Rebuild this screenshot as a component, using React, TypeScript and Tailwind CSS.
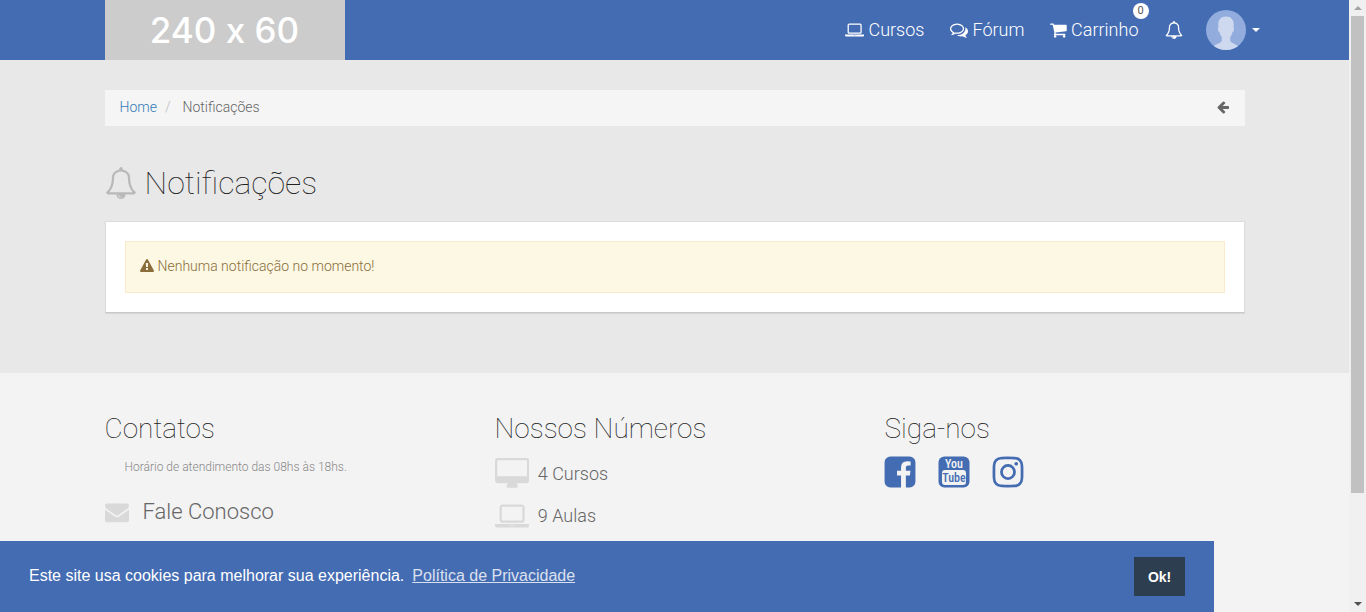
import React from "react";

const glyphs = {
  laptop: {
    width: 1920,
    d: "M416 1280q-66 0-113-47t-47-113v-704q0-66 47-113t113-47h1088q66 0 113 47t47 113v704q0 66-47 113t-113 47h-1088zm-32-864v704q0 13 9.5 22.5t22.5 9.5h1088q13 0 22.5-9.5t9.5-22.5v-704q0-13-9.5-22.5t-22.5-9.5h-1088q-13 0-22.5 9.5t-9.5 22.5zm1376 928h160v96q0 40-47 68t-113 28h-1600q-66 0-113-28t-47-68v-96h1760zm-720 96q16 0 16-16t-16-16h-160q-16 0-16 16t16 16h160z",
  },
  comments: {
    width: 1792,
    d: "M704 384q-153 0-286 52t-211.5 141-78.5 191q0 82 53 158t149 132l97 56-35 84q34-20 62-39l44-31 53 10q78 14 153 14 153 0 286-52t211.5-141 78.5-191-78.5-191-211.5-141-286-52zm0-128q191 0 353.5 68.5t256.5 186.5 94 257-94 257-256.5 186.5-353.5 68.5q-86 0-176-16-124 88-278 128-36 9-86 16h-3q-11 0-20.5-8t-11.5-21q-1-3-1-6.5t.5-6.5 2-6l2.5-5t3.5-5.5 4-5 4.5-5 4-4.5q5-6 23-25t26-29.5 22.5-29 25-38.5 20.5-44q-124-72-195-177t-71-224q0-139 94-257t256.5-186.5 353.5-68.5zm822 1169q10 24 20.5 44t25 38.5 22.5 29 26 29.5 23 25q1 1 4 4.5t4.5 5 4 5 3.5 5.5l2.5 5t2 6 .5 6.5-1 6.5q-3 14-13 22t-22 7q-50-7-86-16-154-40-278-128-90 16-176 16-271 0-472-132 58 4 88 4 161 0 309-45t264-129q125-92 192-212t67-254q0-77-23-152 129 71 204 178t75 230q0 120-71 224.5t-195 176.5z",
  },
  cart: {
    width: 1664,
    d: "M640 1536q0 52-38 90t-90 38-90-38-38-90 38-90 90-38 90 38 38 90zm896 0q0 52-38 90t-90 38-90-38-38-90 38-90 90-38 90 38 38 90zm128-1088v512q0 24-16.5 42.5t-40.5 21.5l-1044 122q13 60 13 70 0 16-24 64h920q26 0 45 19t19 45-19 45-45 19h-1024q-26 0-45-19t-19-45q0-11 8-31.5t16-36 21.5-40 15.5-29.5l-177-823h-204q-26 0-45-19t-19-45 19-45 45-19h256q16 0 28.5 6.5t19.5 15.5 13 24.5 8 26 5.5 29.5 4.5 26h1201q26 0 45 19t19 45z",
  },
  bell: {
    width: 1792,
    d: "M912 1696q0-16-16-16-59 0-101.5-42.5t-42.5-101.5q0-16-16-16t-16 16q0 73 51.5 124.5t124.5 51.5q16 0 16-16zm-666-288h1300q-266-300-266-832 0-51-24-105t-69-103-121.5-80.5-169.5-31.5-169.5 31.5-121.5 80.5-69 103-24 105q0 532-266 832zm1482 0q0 52-38 90t-90 38h-448q0 106-75 181t-181 75-181-75-75-181h-448q-52 0-90-38t-38-90q50-42 91-88t85-119.5 74.5-158.5 50-206 19.5-260q0-152 117-282.5t307-158.5q-8-19-8-39 0-40 28-68t68-28 68 28 28 68q0 20-8 39 190 28 307 158.5t117 282.5q0 139 19.5 260t50 206 74.5 158.5 85 119.5 91 88z",
  },
  arrowLeft: {
    width: 1792,
    d: "M1664 896v128q0 53-32.5 90.5t-84.5 37.5h-704l293 294q38 36 38 90t-38 90l-75 76q-37 37-90 37-52 0-91-37l-651-652q-37-37-37-90 0-52 37-91l651-650q38-38 91-38 52 0 90 38l75 74q38 38 38 91t-38 91l-293 293h704q52 0 84.5 37.5t32.5 90.5z",
  },
  warning: {
    width: 1792,
    d: "M1024 1375v-190q0-14-9.5-23.5t-22.5-9.5h-192q-13 0-22.5 9.5t-9.5 23.5v190q0 14 9.5 23.5t22.5 9.5h192q13 0 22.5-9.5t9.5-23.5zm-2-374l18-459q0-12-10-19-13-11-24-11h-220q-11 0-24 11-10 7-10 21l17 457q0 10 10 16.5t24 6.5h185q14 0 23.5-6.5t10.5-16.5zm-14-934l768 1408q35 63-2 126-17 29-46.5 46t-63.5 17h-1536q-34 0-63.5-17t-46.5-46q-37-63-2-126l768-1408q17-31 47-49t65-18 65 18 47 49z",
  },
  envelope: {
    width: 1792,
    d: "M1792 710v794q0 66-47 113t-113 47h-1472q-66 0-113-47t-47-113v-794q44 49 101 87 362 246 497 345 57 42 92.5 65.5t94.5 48 110 24.5h2q51 0 110-24.5t94.5-48 92.5-65.5q170-123 498-345 57-39 100-87zm0-294q0 79-49 151t-122 123q-376 261-468 325-10 7-42.5 30.5t-54 38-52 32.5-57.5 27-50 9h-2q-23 0-50-9t-57.5-27-52-32.5-54-38-42.5-30.5q-91-64-262-182.5t-205-142.5q-62-42-117-115.5t-55-136.5q0-78 41.5-130t118.5-52h1472q65 0 112.5 47t47.5 113z",
  },
  desktop: {
    width: 1920,
    d: "M1792 992v-832q0-13-9.5-22.5t-22.5-9.5h-1600q-13 0-22.5 9.5t-9.5 22.5v832q0 13 9.5 22.5t22.5 9.5h1600q13 0 22.5-9.5t9.5-22.5zm128-832v1088q0 66-47 113t-113 47h-544q0 37 16 77.5t32 71 16 43.5q0 26-19 45t-45 19h-512q-26 0-45-19t-19-45q0-14 16-44t32-70 16-78h-544q-66 0-113-47t-47-113v-1088q0-66 47-113t113-47h1600q66 0 113 47t47 113z",
  },
  facebook: {
    width: 1792,
    d: "M1376 128q119 0 203.5 84.5t84.5 203.5v960q0 119-84.5 203.5t-203.5 84.5h-188v-595h199l30-232h-229v-148q0-56 23.5-84t91.5-28l122-1v-207q-63-9-178-9-136 0-217.5 80t-81.5 226v171h-200v232h200v595h-532q-119 0-203.5-84.5t-84.5-203.5v-960q0-119 84.5-203.5t203.5-84.5h960z",
  },
  instagram: {
    width: 1792,
    d: "M1152 896q0-106-75-181t-181-75-181 75-75 181 75 181 181 75 181-75 75-181zm138 0q0 164-115 279t-279 115-279-115-115-279 115-279 279-115 279 115 115 279zm108-410q0 38-27 65t-65 27-65-27-27-65 27-65 65-27 65 27 27 65zm-502-220q-7 0-76.5-.5t-105.5 0-96.5 3-103 10-71.5 18.5q-50 20-88 58t-58 88q-11 29-18.5 71.5t-10 103-3 96.5 0 105.5.5 76.5-.5 76.5 0 105.5 3 96.5 10 103 18.5 71.5q20 50 58 88t88 58q29 11 71.5 18.5t103 10 96.5 3 105.5 0 76.5-.5 76.5.5 105.5 0 96.5-3 103-10 71.5-18.5q50-20 88-58t58-88q11-29 18.5-71.5t10-103 3-96.5 0-105.5-.5-76.5.5-76.5 0-105.5-3-96.5-10-103-18.5-71.5q-20-50-58-88t-88-58q-29-11-71.5-18.5t-103-10-96.5-3-105.5 0-76.5.5zm768 630q0 229-5 317-10 208-124 322t-322 124q-88 5-317 5t-317-5q-208-10-322-124t-124-322q-5-88-5-317t5-317q10-208 124-322t322-124q88-5 317-5t317 5q208 10 322 124t124 322q5 88 5 317z",
  },
};

function Icon({ name, className }: { name: keyof typeof glyphs; className: string }) {
  const glyph = glyphs[name];
  return (
    <svg
      aria-hidden="true"
      viewBox={`0 0 ${glyph.width} 1792`}
      fill="currentColor"
      className={`w-auto shrink-0 ${className}`}
    >
      <path d={glyph.d} />
    </svg>
  );
}

function YoutubeIcon() {
  return (
    <svg aria-hidden="true" viewBox="0 0 36 36" className="size-9 shrink-0 font-['Roboto_Condensed','Liberation_Sans_Narrow',Roboto,sans-serif] text-[12px] font-medium">
      <rect x="2.5" y="2.5" width="31" height="31" rx="5.8" fill="#446cb3" />
      <rect x="6" y="16" width="24" height="15" rx="3" fill="#f2f2f2" />
      <text x="18" y="14" textAnchor="middle" fill="#f2f2f2">
        You
      </text>
      <text x="18" y="28" textAnchor="middle" fill="#446cb3">
        Tube
      </text>
    </svg>
  );
}

function Header() {
  return (
    <header className="bg-[#446cb3]">
      <div className="mx-auto flex h-[60px] max-w-[1170px] items-center justify-between pl-[15px]">
        <a href="#" className="flex h-full w-[240px] items-center justify-center bg-[#cccccc] font-[Inter,sans-serif] text-[35px] font-medium text-white [font-feature-settings:'calt'_0]">
          240 x 60
        </a>
        <nav className="flex items-center text-lg font-light text-white">
          <a href="#" className="mr-[26px] flex items-center gap-1">
            <Icon name="laptop" className="h-[18px]" />
            Cursos
          </a>
          <a href="#" className="mr-[26px] flex items-center gap-1">
            <Icon name="comments" className="h-[18px]" />
            Fórum
          </a>
          <a href="#" className="relative mr-[26px] flex items-center gap-1">
            <Icon name="cart" className="h-[18px]" />
            Carrinho
            <span className="absolute -top-[13px] -right-[10px] flex size-4 items-center justify-center rounded-full bg-white text-[11px] leading-4 font-normal text-[#555555]">
              0
            </span>
          </a>
          <a href="#" aria-label="Notificações" className="mr-[23px]">
            <Icon name="bell" className="h-[18px]" />
          </a>
          <button type="button" aria-label="Minha conta" className="flex items-center gap-1.5">
            <svg aria-hidden="true" viewBox="0 0 40 40" className="size-10">
              <defs>
                <clipPath id="avatar">
                  <circle cx="20" cy="20" r="20" />
                </clipPath>
              </defs>
              <g clipPath="url(#avatar)">
                <rect width="40" height="40" fill="#92addd" />
                <path
                  d="M20 6.500c-5 0-7.800 3.300-7.800 8 0 1.200.2 2.200.4 3-.9.200-.8 1.500-.4 2.800.3 1.100.8 1.800 1.400 1.900.4 2 1.300 3.600 2.200 4.900v3.700c-.8 2.500-6.400 3.500-9.300 6.500V41h27v-3.700c-2.900-3-8.500-4-9.300-6.500v-3.700c.9-1.300 1.800-2.900 2.200-4.900.6-.1 1.100-.8 1.400-1.900.4-1.300.5-2.600-.4-2.800.2-.8.4-1.800.4-3 0-4.700-2.800-8-7.800-8z"
                  fill="#ced9ef"
                />
              </g>
            </svg>
            <span className="border-x-4 border-t-4 border-x-transparent border-t-white" />
          </button>
        </nav>
      </div>
    </header>
  );
}

function Footer() {
  return (
    <footer className="flex-1 bg-[#f3f3f3]">
      <div className="mx-auto grid max-w-[1170px] grid-cols-3 gap-[30px] px-[15px] pt-10">
        <section>
          <h2 className="text-[28px] leading-8 font-thin text-[#222222]">Contatos</h2>
          <p className="mt-3 ml-5 text-xs leading-5 font-light text-[#888888]">
            Horário de atendimento das 08hs às 18hs.
          </p>
          <a href="#" className="mt-[19px] flex items-center gap-[14px] text-[22px] leading-8 font-light text-[#666666]">
            <Icon name="envelope" className="h-6 text-[#d9d9d9]" />
            Fale Conosco
          </a>
        </section>
        <section>
          <h2 className="text-[28px] leading-8 font-thin text-[#222222]">Nossos Números</h2>
          <ul className="mt-2 text-lg font-light text-[#666666]">
            <li className="flex h-[42px] items-center gap-[9px]">
              <Icon name="desktop" className="h-8 text-[#d9d9d9]" />
              4 Cursos
            </li>
            <li className="flex h-[42px] items-center gap-[9px]">
              <Icon name="laptop" className="h-8 text-[#d9d9d9]" />
              9 Aulas
            </li>
          </ul>
        </section>
        <section>
          <h2 className="text-[28px] leading-8 font-thin text-[#222222]">Siga-nos</h2>
          <div className="mt-[9px] -ml-[3px] flex gap-[18px] text-[#446cb3]">
            <a href="#" aria-label="Facebook">
              <Icon name="facebook" className="h-9" />
            </a>
            <a href="#" aria-label="YouTube">
              <YoutubeIcon />
            </a>
            <a href="#" aria-label="Instagram">
              <Icon name="instagram" className="h-9" />
            </a>
          </div>
        </section>
      </div>
    </footer>
  );
}

export default function App() {
  return (
    <div className="flex h-screen overflow-hidden font-[Roboto,sans-serif]">
      <div className="relative flex min-w-0 flex-1 flex-col bg-[#e8e8e8]">
        <Header />
        <main className="mx-auto w-full max-w-[1170px] px-[15px] pt-[30px] pb-[60px]">
          <nav aria-label="Trilha" className="flex h-9 items-center justify-between bg-[#f5f5f5] px-[15px] pb-0.5 text-sm font-light text-[#666666]">
            <ol className="flex">
              <li>
                <a href="#" className="text-[#337ab7]">Home</a>
              </li>
              <li>
                <span className="mx-2 text-[#bbbbbb]">/</span>
              </li>
              <li className="ml-1">Notificações</li>
            </ol>
            <a href="#" aria-label="Voltar">
              <Icon name="arrowLeft" className="h-[14px]" />
            </a>
          </nav>
          <h1 className="mt-[37px] flex h-10 items-center gap-2 text-[32px] leading-10 font-thin text-[#222222]">
            <Icon name="bell" className="h-8 text-[#b9b9b9]" />
            Notificações
          </h1>
          <div className="mt-[18px] border border-[#dddddd] border-b-[#c8c8c8] bg-white p-[19px] shadow-[0_1px_1px_#d8d8d8]">
            <p role="status" className="flex h-[52px] items-center gap-1 border border-[#faebcc] bg-[#fcf8e3] px-[14px] pb-0.5 text-sm font-light text-[#8a6d3b]">
              <Icon name="warning" className="h-[14px]" />
              Nenhuma notificação no momento!
            </p>
          </div>
        </main>
        <Footer />
        <div
          role="dialog"
          aria-label="Cookies"
          className="absolute bottom-0 left-0 flex h-[71px] w-[90%] items-center justify-between bg-[#446cb3] px-[29px] font-['Liberation_Sans',Arial,sans-serif] text-base text-white"
        >
          <p className="pb-0.5">
            Este site usa cookies para melhorar sua experiência.
            <a href="#" className="ml-2 underline opacity-80">Política de Privacidade</a>
          </p>
          <button type="button" className="h-[39px] w-[51px] bg-[#2c3e50] text-sm font-bold">
            Ok!
          </button>
        </div>
      </div>
      <div aria-hidden="true" className="flex w-[17px] shrink-0 flex-col items-center bg-[#f0f0f0]">
        <span className="my-[6px] border-x-4 border-b-4 border-x-transparent border-b-[#a3a3a3]" />
        <span className="h-[78%] w-[13px] bg-[#c1c1c1]" />
        <span className="mt-auto mb-[6px] border-x-4 border-t-4 border-x-transparent border-t-[#505050]" />
      </div>
    </div>
  );
}
